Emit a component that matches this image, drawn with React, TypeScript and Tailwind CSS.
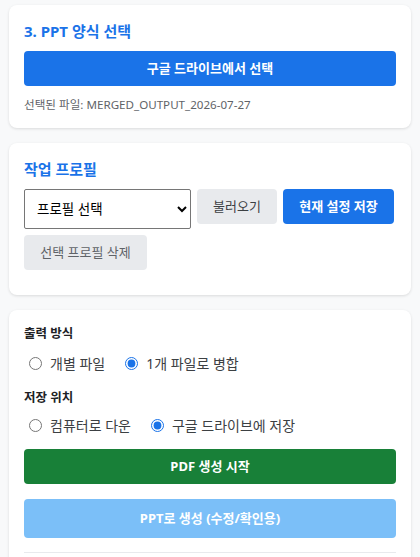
import { useState } from 'react'

function Card({ children, className = '' }: { children: React.ReactNode; className?: string }) {
  return (
    <section className={`rounded-lg bg-white px-[15px] pt-[15px] shadow-[0_1px_3px_rgba(0,0,0,0.12)] ${className}`}>
      {children}
    </section>
  )
}

function Radio({
  name,
  label,
  checked,
  onChange,
}: {
  name: string
  label: string
  checked: boolean
  onChange: () => void
}) {
  return (
    <label className="flex items-center text-[14px] text-[#3c4043]">
      <input
        type="radio"
        name={name}
        checked={checked}
        onChange={onChange}
        className="ml-[5px] mr-[8px] h-[13px] w-[13px] accent-[#1a73e8]"
      />
      {label}
    </label>
  )
}

export default function App() {
  const [mode, setMode] = useState<'split' | 'merge'>('merge')
  const [target, setTarget] = useState<'local' | 'drive'>('drive')

  return (
    <div className="min-h-[557px] bg-[#f8f9fa] px-[9px] pt-[5px] font-['Noto_Sans','Noto_Sans_CJK_KR',sans-serif]">
      <div className="flex flex-col gap-[15px]">
        <Card className="pb-[15px]">
          <h3 className="text-[15px] font-bold leading-[22px] text-[#1a73e8]">3. PPT 양식 선택</h3>
          <button className="mt-[9px] h-[35px] w-full rounded-[4px] bg-[#1a73e8] text-[13px] font-bold text-white">
            구글 드라이브에서 선택
          </button>
          <p className="mt-[10px] text-[11.6px] leading-[17px] text-[#5f6368]">
            선택된 파일: MERGED_OUTPUT_2026-07-27
          </p>
        </Card>

        <Card className="pb-[25px]">
          <h3 className="text-[15px] font-bold leading-[22px] text-[#1a73e8]">작업 프로필</h3>
          <div className="mt-[9px] flex flex-wrap items-start gap-[6px]">
            <select className="h-[40px] w-[167px] rounded-[2px] border border-[#767676] bg-white px-[8px] text-[13.5px] text-black">
              <option>프로필 선택</option>
            </select>
            <button className="h-[35px] w-[80px] rounded-[4px] bg-[#e8eaed] text-[13px] text-[#3c4043]">
              불러오기
            </button>
            <button className="h-[35px] w-[111px] rounded-[4px] bg-[#1a73e8] text-[13px] font-bold text-white">
              현재 설정 저장
            </button>
            <button className="h-[35px] w-[123px] rounded-[4px] bg-[#e8eaed] text-[13px] text-[#5f6368]">
              선택 프로필 삭제
            </button>
          </div>
        </Card>

        <Card className="pb-[15px]">
          <div className="text-[12.5px] font-bold leading-[18px] text-[#202124]">출력 방식</div>
          <div className="mt-[10px] flex gap-[15px]">
            <Radio name="mode" label="개별 파일" checked={mode === 'split'} onChange={() => setMode('split')} />
            <Radio name="mode" label="1개 파일로 병합" checked={mode === 'merge'} onChange={() => setMode('merge')} />
          </div>
          <div className="mt-[15px] text-[12.5px] font-bold leading-[18px] text-[#202124]">저장 위치</div>
          <div className="mt-[8px] flex gap-[15px]">
            <Radio name="target" label="컴퓨터로 다운" checked={target === 'local'} onChange={() => setTarget('local')} />
            <Radio
              name="target"
              label="구글 드라이브에 저장"
              checked={target === 'drive'}
              onChange={() => setTarget('drive')}
            />
          </div>
          <button className="mt-[13px] h-[35px] w-full rounded-[4px] bg-[#188038] text-[13px] font-bold text-white">
            PDF 생성 시작
          </button>
          <button className="mt-[15px] h-[39px] w-full rounded-[4px] bg-[#7bbff8] text-[13px] font-bold text-white">
            PPT로 생성 (수정/확인용)
          </button>
          <div className="mt-[14px] h-px bg-[#e8eaed]" />
          <div className="h-[40px]" />
        </Card>
      </div>
    </div>
  )
}
